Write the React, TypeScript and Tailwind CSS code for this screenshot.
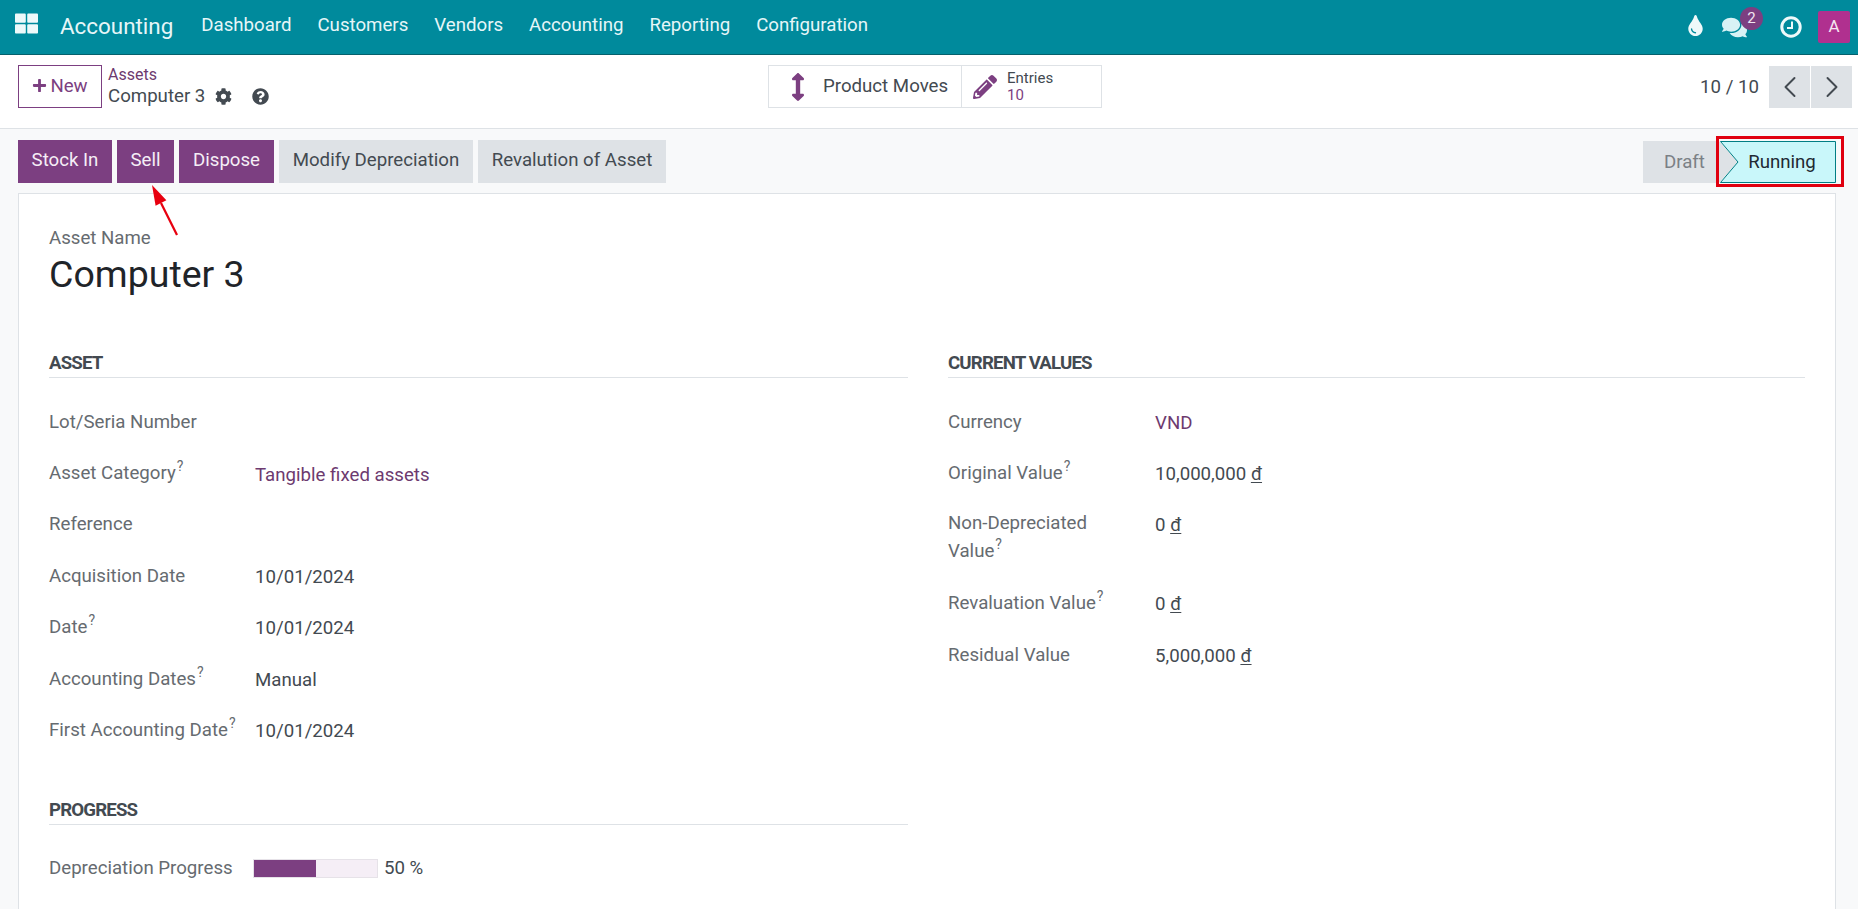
import React from "react";
import { FaArrowsAltV, FaCog, FaComments, FaPencilAlt, FaPlus, FaQuestionCircle, FaThLarge, FaTint } from "react-icons/fa";
import { ChevronLeft, ChevronRight } from "lucide-react";

const navItems = ["Dashboard", "Customers", "Vendors", "Accounting", "Reporting", "Configuration"];

const Hint = () => <sup className="relative -top-[8px] ml-px align-baseline text-[14px] leading-none">?</sup>;

type RowProps = {
  label: React.ReactNode;
  value?: React.ReactNode;
  link?: boolean;
  tall?: boolean;
  right?: boolean;
};

const Row = ({ label, value, link, tall, right }: RowProps) => {
  return (
    <div className={tall ? "flex h-[79px] pt-[10px]" : "flex h-[51.4px] items-center"}>
      <div className={`${right ? "w-[207px]" : "w-[206px]"} ${tall ? "leading-[28px]" : ""} text-[#666b70]`}>{label}</div>
      <div className={link ? "pt-[3px] text-[#6d3a6f]" : "pt-[2px] text-[#434a51]"}>{value}</div>
    </div>
  );
};

const Section = ({ title, children }: { title: string; children: React.ReactNode }) => {
  return (
    <div>
      <div className="h-[24px] border-b border-[#dee2e6] text-[18.67px] leading-[19px] font-bold tracking-[-0.85px] text-[#434a51]">{title}</div>
      <div className="pt-[18px]">{children}</div>
    </div>
  );
};

const Money = ({ amount }: { amount: string }) => (
  <span>
    {amount} <span className="underline underline-offset-2">đ</span>
  </span>
);

export default function App() {
  return (
    <div className="flex h-[909px] w-[1858px] flex-col overflow-hidden bg-[#f8f9fa] font-['Roboto',sans-serif] text-[18.67px] text-[#434a51]">
      <header className="flex h-[55px] shrink-0 items-center border-b border-[#05606c] bg-[#008a9c] text-[#e6f6f8]">
        <FaThLarge className="mb-[7px] ml-[15px] size-[23px] text-[#eef9fa]" />
        <span className="ml-[22px] pb-[1px] text-[22.4px] leading-none">Accounting</span>
        <nav className="ml-[28px] flex gap-[26px] pb-[4px]">
          {navItems.map((item) => (
            <span key={item}>{item}</span>
          ))}
        </nav>
        <div className="ml-auto flex items-center">
          <FaTint className="mb-[3px] size-[21px] text-[#eef9fa]" />
          <div className="relative ml-[16px]">
            <FaComments className="size-[25px] text-[#d8f2f5]" />
            <span className="absolute -top-[8px] left-[18px] flex size-[23px] items-center justify-center rounded-full bg-[#7c3f81] text-[15px] text-[#f0e6f1]">2</span>
          </div>
          <svg className="ml-[32px] size-[24px]" viewBox="0 0 24 24" fill="none" stroke="#eef9fa">
            <circle cx="12" cy="12" r="9.2" strokeWidth="3" />
            <path d="M13 6.5 V13 H8" strokeWidth="2" />
          </svg>
          <div className="ml-[15px] mr-[8px] flex size-[32px] items-center justify-center rounded-[2px] bg-[#b0308f] text-[17px] text-[#f5e6f1]">A</div>
        </div>
      </header>

      <div className="flex h-[74px] shrink-0 items-center border-b border-[#dee2e6] bg-white pb-[10px]">
        <div className="ml-[18px] flex h-[43px] w-[84px] items-center justify-center gap-[3px] border border-[#7c3f81] pb-[2px] text-[#7c3f81]">
          <FaPlus className="size-[15px]" />
          New
        </div>
        <div className="ml-[6px] w-[660px] pt-[1px]">
          <div className="text-[16px] leading-[18px] text-[#6d3a6f]">Assets</div>
          <div className="flex items-center leading-[25px]">
            Computer 3
            <FaCog className="ml-[10px] size-[17px]" />
            <FaQuestionCircle className="ml-[20px] size-[17px]" />
          </div>
        </div>
        <div className="flex h-[43px] w-[334px] border border-[#dee2e6]">
          <div className="flex w-[193px] items-center border-r border-[#dee2e6]">
            <FaArrowsAltV className="ml-[15px] size-[28px] text-[#7c3f81]" />
            <span className="ml-[11px] pb-[2px]">Product Moves</span>
          </div>
          <div className="flex items-center">
            <FaPencilAlt className="ml-[11px] size-[24px] text-[#7c3f81]" />
            <div className="ml-[10px] text-[15px] leading-[17px]">
              <div>Entries</div>
              <div className="text-[#7c3f81]">10</div>
            </div>
          </div>
        </div>
        <div className="ml-auto flex items-center">
          <span className="mr-[10px]">10 / 10</span>
          <div className="flex h-[42px] w-[41px] items-center justify-center bg-[#dee2e6]">
            <ChevronLeft className="size-[36px]" strokeWidth={1.3} />
          </div>
          <div className="ml-px mr-[6px] flex h-[42px] w-[41px] items-center justify-center bg-[#dee2e6]">
            <ChevronRight className="size-[36px]" strokeWidth={1.3} />
          </div>
        </div>
      </div>

      <div className="flex h-[64px] shrink-0 items-start justify-between pl-[18px] pr-[22px] pt-[11px]">
        <div className="flex h-[43px] gap-[5px] leading-[40px]">
          <div className="w-[94px] bg-[#7c3f81] text-center text-[#f5eef6]">Stock In</div>
          <div className="w-[57px] bg-[#7c3f81] text-center text-[#f5eef6]">Sell</div>
          <div className="w-[95px] bg-[#7c3f81] text-center text-[#f5eef6]">Dispose</div>
          <div className="w-[194px] bg-[#dee2e6] text-center">Modify Depreciation</div>
          <div className="w-[188px] bg-[#dee2e6] text-center">Revalution of Asset</div>
        </div>
        <div className="mt-px flex h-[42px]">
          <div className="flex w-[95px] items-center bg-[#dee2e6] pl-[21px] text-[#7b8085] [clip-path:polygon(0_0,80%_0,100%_50%,80%_100%,0_100%)]">Draft</div>
          <div className="relative -ml-[18px] flex w-[116px] items-center justify-center pl-[8px] text-[#1f2a33]">
            <svg className="absolute inset-0 size-full" viewBox="0 0 116 42" fill="none">
              <polygon points="0.5,0.5 115.5,0.5 115.5,41.5 0.5,41.5 18,21" fill="#c9f7fa" stroke="#017e84" />
            </svg>
            <span className="relative">Running</span>
            <div className="absolute -top-[5px] -bottom-[4px] -left-[4px] -right-[8px] border-[3px] border-[#e0000f]" />
          </div>
        </div>
      </div>

      <div className="relative ml-[18px] mr-[22px] flex-1 border border-b-0 border-[#dee2e6] bg-white pl-[30px] pr-[30px] pt-[33px]">
        <svg className="absolute -top-[9px] left-[130px] h-[52px] w-[34px]" viewBox="0 0 34 52" fill="none">
          <path d="M28 50 L12 18" stroke="#e8000f" strokeWidth="2.2" />
          <polygon points="3,0 17.4,15.3 6.6,20.7" fill="#e8000f" />
        </svg>
        <div className="leading-[22px] text-[#666b70]">Asset Name</div>
        <h1 className="mt-[1px] text-[37.5px] leading-[48px] text-[#1f2429]">Computer 3</h1>
        <div className="mt-[56px] grid grid-cols-[859px_858px] gap-x-[39px]">
          <div>
            <Section title="ASSET">
              <Row label="Lot/Seria Number" />
              <Row label={<>Asset Category<Hint /></>} value="Tangible fixed assets" link />
              <Row label="Reference" />
              <Row label="Acquisition Date" value="10/01/2024" />
              <Row label={<>Date<Hint /></>} value="10/01/2024" />
              <Row label={<>Accounting Dates<Hint /></>} value="Manual" />
              <Row label={<>First Accounting Date<Hint /></>} value="10/01/2024" />
            </Section>
            <div className="mt-[45px]">
              <Section title="PROGRESS">
                <div className="flex h-[51px] items-center">
                  <div className="w-[204px] text-[#666b70]">Depreciation Progress</div>
                  <div className="flex h-[19px] w-[125px] border border-[#e6e2e8] bg-[#f5eef6]">
                    <div className="h-full w-1/2 bg-[#7c3f81]" />
                  </div>
                  <span className="ml-[6px]">50 %</span>
                </div>
              </Section>
            </div>
          </div>
          <div className="pl-px">
            <Section title="CURRENT VALUES">
              <Row right label="Currency" value="VND" link />
              <Row right label={<>Original Value<Hint /></>} value={<Money amount="10,000,000" />} />
              <Row right tall label={<><div>Non-Depreciated</div><div>Value<Hint /></div></>} value={<Money amount="0" />} />
              <Row right label={<>Revaluation Value<Hint /></>} value={<Money amount="0" />} />
              <Row right label="Residual Value" value={<Money amount="5,000,000" />} />
            </Section>
          </div>
        </div>
      </div>
    </div>
  );
}
